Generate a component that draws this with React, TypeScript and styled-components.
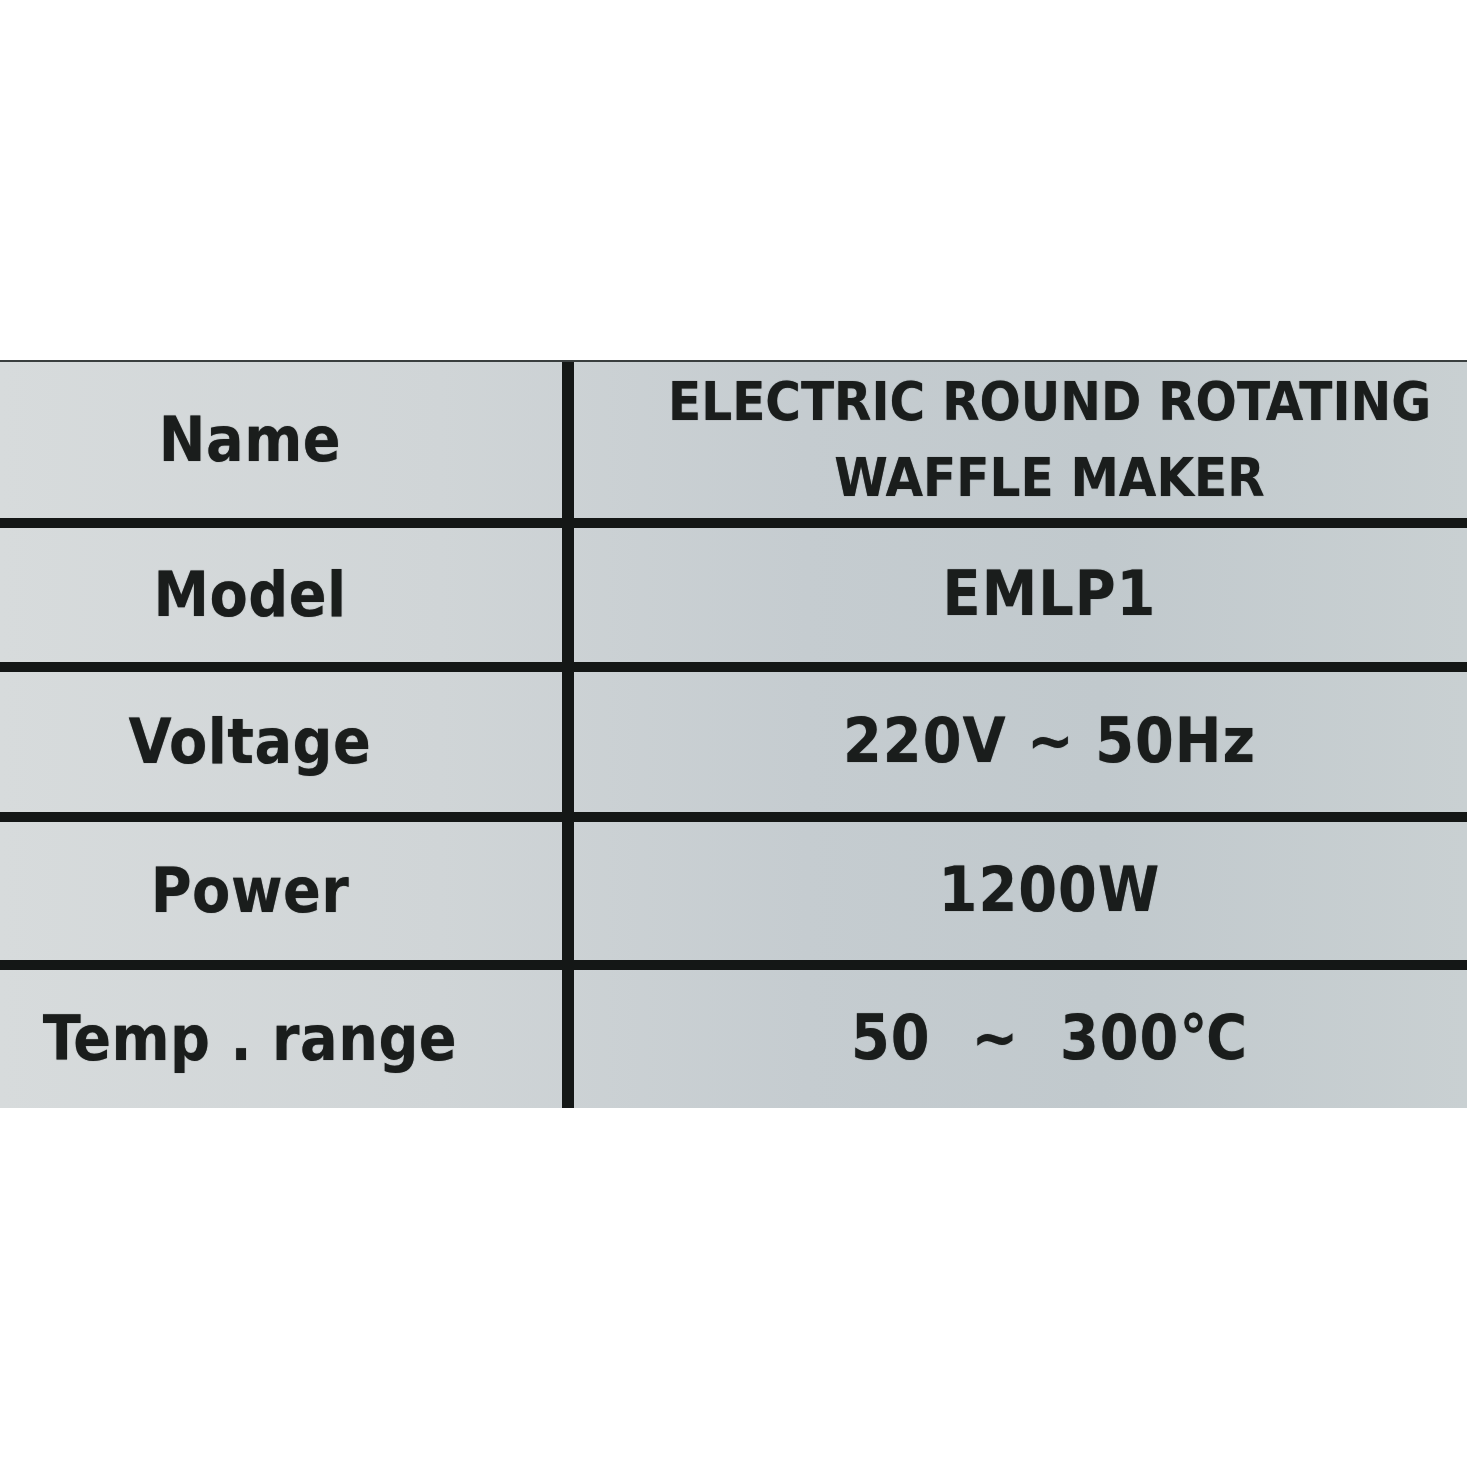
import React from 'react';
import styled, { createGlobalStyle } from 'styled-components';

const GlobalStyle = createGlobalStyle`
  html, body {
    margin: 0;
    padding: 0;
    background: #ffffff;
  }
`;

interface ISpecRow {
  label: string;
  value: React.ReactNode;
  height: number;
  heading?: boolean;
}

const specRows: ISpecRow[] = [
  {
    label: 'Name',
    value: (
      <>
        ELECTRIC ROUND ROTATING
        <br />
        WAFFLE MAKER
      </>
    ),
    height: 156,
    heading: true,
  },
  { label: 'Model', value: 'EMLP1', height: 134 },
  { label: 'Voltage', value: '220V ~ 50Hz', height: 140 },
  { label: 'Power', value: '1200W', height: 138 },
  { label: 'Temp . range', value: '50  ~  300℃', height: 138 },
];

function App(): React.ReactElement {
  return (
    <Page>
      <GlobalStyle />
      <Plate $rows={specRows.map((row) => `${row.height}px`).join(' ')}>
        {specRows.map((row) => (
          <React.Fragment key={row.label}>
            <LabelCell>
              <Label>{row.label}</Label>
            </LabelCell>
            <ValueCell>
              <Value $heading={row.heading}>{row.value}</Value>
            </ValueCell>
          </React.Fragment>
        ))}
      </Plate>
    </Page>
  );
}

export default App;

const Page = styled.div`
  display: flex;
  align-items: center;
  width: 100%;
  min-height: 100vh;
`;

const Plate = styled.div<{ $rows: string }>`
  display: grid;
  grid-template-columns: 562px 1fr;
  grid-template-rows: ${(p) => p.$rows};
  column-gap: 12px;
  row-gap: 10px;
  width: 100%;
  background: #141716;
  border-top: 2px solid #3a3f3f;
`;

const Cell = styled.div`
  display: flex;
  align-items: center;
  justify-content: center;
  background: linear-gradient(
      90deg,
      #d7dbdc 0%,
      #d0d5d7 30%,
      #c5ccd0 55%,
      #c1c9cd 75%,
      #c9d0d2 100%
    )
    fixed;
  color: #1a1d1c;
  font-family: 'DejaVu Sans', 'Liberation Sans', sans-serif;
  font-stretch: condensed;
  font-weight: 700;
  text-align: center;
  text-shadow: 0 0 1px rgba(20, 24, 23, 0.6);
`;

const LabelCell = styled(Cell)`
  padding-right: 62px;
`;

const ValueCell = styled(Cell)`
  padding-left: 58px;
`;

const Label = styled.div`
  font-size: 62px;
  letter-spacing: 0.5px;
  white-space: pre;
`;

const Value = styled.div<{ $heading?: boolean }>`
  font-size: ${(p) => (p.$heading ? '54px' : '62px')};
  line-height: ${(p) => (p.$heading ? '76px' : '1.2')};
  letter-spacing: ${(p) => (p.$heading ? '0' : '1px')};
  white-space: pre;
`;
